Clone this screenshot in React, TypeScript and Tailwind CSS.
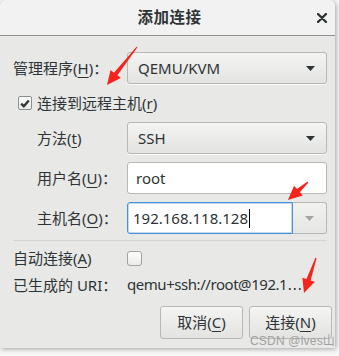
import React from "react";

// red annotation arrow: tapered shaft + triangular head
function arrowPoints(tx: number, ty: number, hx: number, hy: number) {
    const dx = hx - tx;
    const dy = hy - ty;
    const len = Math.sqrt(dx * dx + dy * dy);
    const ux = dx / len;
    const uy = dy / len;
    const nx = -uy;
    const ny = ux;
    const bx = hx - ux * 14;
    const by = hy - uy * 14;
    const pts = [
        [tx + nx * 0.6, ty + ny * 0.6],
        [bx + nx * 2.2, by + ny * 2.2],
        [bx + nx * 6.5, by + ny * 6.5],
        [hx, hy],
        [bx - nx * 6.5, by - ny * 6.5],
        [bx - nx * 2.2, by - ny * 2.2],
        [tx - nx * 0.6, ty - ny * 0.6],
    ];
    return pts.map((p) => p.join(",")).join(" ");
}

function Caret({ light }: { light?: boolean }) {
    return (
        <svg width="9" height="5" viewBox="0 0 9 5">
            <polygon points="0,0 9,0 4.5,5" fill={light ? "#a4a6a3" : "#2e3436"} />
        </svg>
    );
}

function Dropdown({ value }: { value: string }) {
    return (
        <div className="h-[32px] w-[200px] rounded-[3px] border border-[#b7b8b4] bg-gradient-to-b from-[#f4f4f3] to-[#e3e3e1] shadow-[0_1px_0_rgba(255,255,255,0.8)] flex items-center justify-between pl-[10px] pr-[11px]">
            <span>{value}</span>
            <Caret />
        </div>
    );
}

const U = ({ c }: { c: string }) => <span className="underline underline-offset-[3px]">{c}</span>;

export default function App() {
    return (
        <div
            className="relative w-[339px] h-[356px] bg-[#f7f7f7] overflow-hidden text-[15px] text-[#2e3436]"
            style={{ fontFamily: '"Noto Sans", "Noto Sans CJK SC", sans-serif' }}
        >
            <div className="w-[335px] h-[348px] bg-[#e8e8e7] rounded-t-[6px] shadow-[1px_1px_5px_rgba(0,0,0,0.35)] flex flex-col">
                {/* title bar */}
                <div className="relative h-[36px] shrink-0 bg-[#f2f2f2] border-b border-[#8f8f8f] rounded-t-[6px] flex items-center justify-center pl-[4px]">
                    <span className="font-bold text-[15.5px] tracking-[0.5px]">添加连接</span>
                    <svg className="absolute right-[8px] top-[13px]" width="10" height="10" viewBox="0 0 10 10">
                        <path d="M1 1 L9 9 M9 1 L1 9" stroke="#2e3436" strokeWidth="2.4" strokeLinecap="round" />
                    </svg>
                </div>

                <div className="pl-[13px] pt-[16px] flex flex-col">
                    <div className="flex items-center h-[32px]">
                        <span className="w-[114px]">管理程序(<U c="H" />)：</span>
                        <Dropdown value="QEMU/KVM" />
                    </div>

                    <div className="flex items-center h-[38px] pl-[5px]">
                        <div className="w-[14px] h-[14px] rounded-[2px] border border-[#8b8e8f] bg-gradient-to-b from-[#fbfbfb] to-[#e9e9e8] flex items-center justify-center">
                            <svg width="10" height="9" viewBox="0 0 10 9">
                                <path d="M1.2 4.6 L3.8 7.2 L8.8 1.4" stroke="#2e3436" strokeWidth="2.3" fill="none" />
                            </svg>
                        </div>
                        <span className="ml-[5px]">连接到远程主机(<U c="r" />)</span>
                    </div>

                    <div className="flex flex-col gap-[8px]">
                        <div className="flex items-center h-[32px]">
                            <span className="w-[114px] pl-[24px]">方法(<U c="t" />)</span>
                            <Dropdown value="SSH" />
                        </div>
                        <div className="flex items-center h-[32px]">
                            <span className="w-[114px] pl-[24px]">用户名(<U c="U" />)：</span>
                            <div className="h-[32px] w-[200px] rounded-[3px] border border-[#b7b8b4] bg-white flex items-center pl-[8px]">
                                root
                            </div>
                        </div>
                        <div className="flex items-center h-[32px]">
                            <span className="w-[114px] pl-[24px]">主机名(<U c="O" />)：</span>
                            <div className="h-[32px] w-[166px] rounded-l-[3px] border border-[#4a90d9] shadow-[inset_0_0_0_1px_rgba(74,144,217,0.35)] bg-white flex items-center pl-[5px]">
                                <span>192.168.118.128</span>
                                <span className="w-px h-[19px] bg-black ml-px" />
                            </div>
                            <div className="h-[32px] w-[34px] rounded-r-[3px] border border-l-0 border-[#b7b8b4] bg-gradient-to-b from-[#f1f1f0] to-[#e6e6e4] flex items-center justify-center">
                                <Caret light />
                            </div>
                        </div>
                    </div>

                    <div className="mt-[6px] w-[314px] h-px bg-[#d3d3d1]" />

                    <div className="mt-[7px] flex items-center h-[20px]">
                        <span className="w-[114px]">自动连接(<U c="A" />)</span>
                        <div className="w-[15px] h-[15px] rounded-[3px] border border-[#a1a3a1] bg-gradient-to-b from-[#fdfdfd] to-[#ececeb]" />
                    </div>

                    <div className="mt-[7px] flex items-center h-[20px]">
                        <span className="w-[114px]">已生成的 URI：</span>
                        <span className="tracking-[-0.45px]">
                            qemu+ssh://root@192.1<span className="tracking-[1px]" style={{ fontFamily: '"DejaVu Sans", sans-serif' }}>…</span>
                        </span>
                    </div>

                    <div className="mt-[11px] w-[319px] flex justify-end gap-[6px]">
                        <div className="w-[83px] h-[33px] rounded-[3px] border border-[#b7b8b4] bg-gradient-to-b from-[#f4f4f3] to-[#e3e3e1] flex items-center justify-center">
                            取消(<U c="C" />)
                        </div>
                        <div className="w-[83px] h-[33px] rounded-[3px] border border-[#b7b8b4] bg-gradient-to-b from-[#f4f4f3] to-[#e3e3e1] flex items-center justify-center">
                            连接(<U c="N" />)
                        </div>
                    </div>
                </div>
            </div>

            {/* watermark */}
            <span
                className="absolute left-[250px] top-[332px] text-[12px] text-[#a2a2a2] tracking-[0.2px]"
                style={{ fontFamily: '"Liberation Sans", "Noto Sans CJK SC", sans-serif' }}
            >
                CSDN @lves山
            </span>

            {/* annotation arrows */}
            <svg className="absolute left-0 top-0 pointer-events-none" width="339" height="356">
                <polygon points={arrowPoints(137, 47, 107, 85)} fill="#f5231b" />
                <polygon points={arrowPoints(308, 182, 288, 200)} fill="#f5231b" />
                <polygon points={arrowPoints(316, 258, 304, 293)} fill="#f5231b" />
            </svg>
        </div>
    );
}
